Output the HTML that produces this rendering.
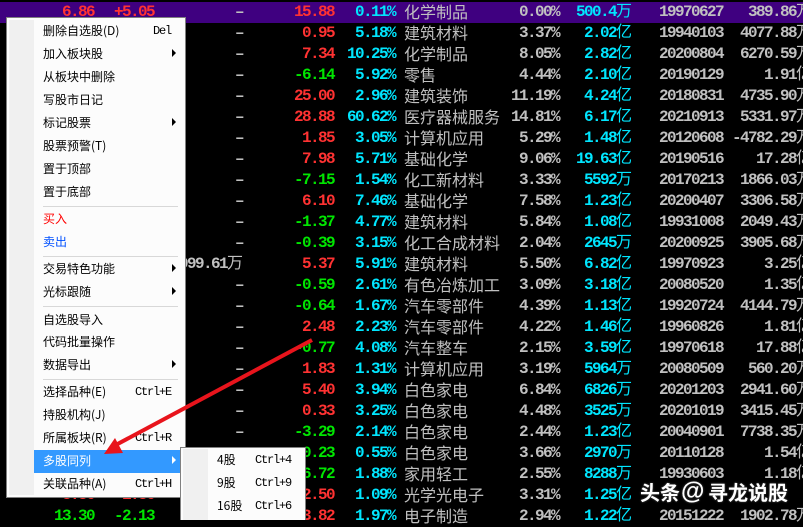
<!DOCTYPE html>
<html><head><meta charset="utf-8"><style>
html,body{margin:0;padding:0;background:#000}
body{width:803px;height:520px;overflow:hidden;position:relative}
.r{position:absolute;left:0;width:812px;height:21px;font:bold 16px/21px "Liberation Mono",monospace;letter-spacing:-1.6px;white-space:nowrap}
.r span{position:absolute;top:0;text-align:right}
.r u{text-decoration:none;font:normal 16px/0 "WenQuanYi Zen Hei","Noto Sans CJK SC",sans-serif;letter-spacing:0;color:inherit}
.a{left:20px;width:74px}.b{left:100px;width:54px}
.c{left:150px;width:93px;color:#c0c0c0}
.d{left:260px;width:74px}.e{left:335px;width:60px;color:#00e6ff}
.r .f{left:404px;top:-1px;text-align:left;font:normal 16px/21px "WenQuanYi Zen Hei","Noto Sans CJK SC",sans-serif;letter-spacing:0;color:#c0c0c0}
.g{left:480px;width:79px;color:#c0c0c0}.h{left:540px;width:92px;color:#00e6ff}
.r .i{left:659px;text-align:left;color:#c0c0c0}.j{left:670px;width:142px;color:#c0c0c0}
.R{color:#ff3232}.G{color:#00e600}
#m,#s{position:absolute;background:#fcfcfc;border:1px solid #808080;box-sizing:border-box}
#m{left:6px;top:17px;width:180px;height:481px}
#s{left:180px;top:447px;width:126px;height:80px}
.gt{position:absolute;background:#f0f0f0}
.t{position:absolute;font:12px/14px "WenQuanYi Zen Hei","Noto Sans CJK SC",sans-serif;color:#000;white-space:nowrap}
.k{position:absolute;font:12px/14px "Liberation Mono",monospace;letter-spacing:-1.2px;color:#000;white-space:nowrap}
.sep{position:absolute;left:43px;width:135px;height:1px;background:#d8d8d8}
.ar{position:absolute;width:0;height:0;border-left:4px solid #000;border-top:4px solid transparent;border-bottom:4px solid transparent}
.wm{position:absolute;top:480px;font:bold 20px/24px "Noto Sans CJK SC",sans-serif;color:#fff;white-space:nowrap;text-shadow:0 0 2px #555}
</style></head><body>
<div style="position:absolute;left:0;top:2px;width:803px;height:21px;background:#3f0080"></div>
<div class="r" style="top:2px"><span class="a R">6.86</span><span class="b R">+5.05</span><span class="c">–</span><span class="d R">15.88</span><span class="e">0.11%</span><span class="f">化学制品</span><span class="g">0.00%</span><span class="h">500.4<u>万</u></span><span class="i">19970627</span><span class="j">389.86<u>万</u></span></div>
<div class="r" style="top:23px"><span class="c">–</span><span class="d R">0.95</span><span class="e">5.18%</span><span class="f">建筑材料</span><span class="g">3.37%</span><span class="h">2.02<u>亿</u></span><span class="i">19940103</span><span class="j">4077.88<u>万</u></span></div>
<div class="r" style="top:44px"><span class="c">–</span><span class="d R">7.34</span><span class="e">10.25%</span><span class="f">化学制品</span><span class="g">8.05%</span><span class="h">2.82<u>亿</u></span><span class="i">20200804</span><span class="j">6270.59<u>万</u></span></div>
<div class="r" style="top:65px"><span class="c">–</span><span class="d G">-6.14</span><span class="e">5.92%</span><span class="f">零售</span><span class="g">4.44%</span><span class="h">2.10<u>亿</u></span><span class="i">20190129</span><span class="j">1.91<u>亿</u></span></div>
<div class="r" style="top:86px"><span class="c">–</span><span class="d R">25.00</span><span class="e">2.96%</span><span class="f">建筑装饰</span><span class="g">11.19%</span><span class="h">4.24<u>亿</u></span><span class="i">20180831</span><span class="j">4735.90<u>万</u></span></div>
<div class="r" style="top:107px"><span class="c">–</span><span class="d R">28.88</span><span class="e">60.62%</span><span class="f">医疗器械服务</span><span class="g">14.81%</span><span class="h">6.17<u>亿</u></span><span class="i">20210913</span><span class="j">5331.97<u>万</u></span></div>
<div class="r" style="top:128px"><span class="c">–</span><span class="d R">1.85</span><span class="e">3.05%</span><span class="f">计算机应用</span><span class="g">5.29%</span><span class="h">1.48<u>亿</u></span><span class="i">20120608</span><span class="j">-4782.29<u>万</u></span></div>
<div class="r" style="top:149px"><span class="c">–</span><span class="d R">7.98</span><span class="e">5.71%</span><span class="f">基础化学</span><span class="g">9.06%</span><span class="h">19.63<u>亿</u></span><span class="i">20190516</span><span class="j">17.28<u>亿</u></span></div>
<div class="r" style="top:170px"><span class="c">–</span><span class="d G">-7.15</span><span class="e">1.54%</span><span class="f">化工新材料</span><span class="g">3.33%</span><span class="h">5592<u>万</u></span><span class="i">20170213</span><span class="j">1866.03<u>万</u></span></div>
<div class="r" style="top:191px"><span class="c">–</span><span class="d R">6.10</span><span class="e">7.46%</span><span class="f">基础化学</span><span class="g">7.58%</span><span class="h">1.23<u>亿</u></span><span class="i">20200407</span><span class="j">3306.58<u>万</u></span></div>
<div class="r" style="top:212px"><span class="c">–</span><span class="d G">-1.37</span><span class="e">4.77%</span><span class="f">建筑材料</span><span class="g">5.84%</span><span class="h">1.08<u>亿</u></span><span class="i">19931008</span><span class="j">2049.43<u>万</u></span></div>
<div class="r" style="top:233px"><span class="c">–</span><span class="d G">-0.39</span><span class="e">3.15%</span><span class="f">化工合成材料</span><span class="g">2.04%</span><span class="h">2645<u>万</u></span><span class="i">20200925</span><span class="j">3905.68<u>万</u></span></div>
<div class="r" style="top:254px"><span class="c">4999.61<u>万</u></span><span class="d R">5.37</span><span class="e">5.91%</span><span class="f">建筑材料</span><span class="g">5.50%</span><span class="h">6.82<u>亿</u></span><span class="i">19970923</span><span class="j">3.25<u>亿</u></span></div>
<div class="r" style="top:275px"><span class="c">–</span><span class="d G">-0.59</span><span class="e">2.61%</span><span class="f">有色冶炼加工</span><span class="g">3.09%</span><span class="h">3.18<u>亿</u></span><span class="i">20080520</span><span class="j">1.35<u>亿</u></span></div>
<div class="r" style="top:296px"><span class="c">–</span><span class="d G">-0.64</span><span class="e">1.67%</span><span class="f">汽车零部件</span><span class="g">4.39%</span><span class="h">1.13<u>亿</u></span><span class="i">19920724</span><span class="j">4144.79<u>万</u></span></div>
<div class="r" style="top:317px"><span class="c">–</span><span class="d R">2.48</span><span class="e">2.23%</span><span class="f">汽车零部件</span><span class="g">4.22%</span><span class="h">1.46<u>亿</u></span><span class="i">19960826</span><span class="j">1.81<u>亿</u></span></div>
<div class="r" style="top:338px"><span class="c">–</span><span class="d G">-0.77</span><span class="e">4.08%</span><span class="f">汽车整车</span><span class="g">2.15%</span><span class="h">3.59<u>亿</u></span><span class="i">19970618</span><span class="j">17.88<u>亿</u></span></div>
<div class="r" style="top:359px"><span class="c">–</span><span class="d R">1.83</span><span class="e">1.31%</span><span class="f">计算机应用</span><span class="g">3.19%</span><span class="h">5964<u>万</u></span><span class="i">20080509</span><span class="j">560.20<u>万</u></span></div>
<div class="r" style="top:380px"><span class="c">–</span><span class="d R">5.40</span><span class="e">3.94%</span><span class="f">白色家电</span><span class="g">6.84%</span><span class="h">6826<u>万</u></span><span class="i">20201203</span><span class="j">2941.60<u>万</u></span></div>
<div class="r" style="top:401px"><span class="c">–</span><span class="d R">0.33</span><span class="e">3.25%</span><span class="f">白色家电</span><span class="g">4.48%</span><span class="h">3525<u>万</u></span><span class="i">20201019</span><span class="j">3415.45<u>万</u></span></div>
<div class="r" style="top:422px"><span class="c">–</span><span class="d G">-3.29</span><span class="e">2.14%</span><span class="f">白色家电</span><span class="g">2.44%</span><span class="h">1.23<u>亿</u></span><span class="i">20040901</span><span class="j">7738.35<u>万</u></span></div>
<div class="r" style="top:443px"><span class="d G">0.23</span><span class="e">0.55%</span><span class="f">白色家电</span><span class="g">3.66%</span><span class="h">2970<u>万</u></span><span class="i">20110128</span><span class="j">1.54<u>亿</u></span></div>
<div class="r" style="top:464px"><span class="d G">6.72</span><span class="e">1.88%</span><span class="f">家用轻工</span><span class="g">2.55%</span><span class="h">8288<u>万</u></span><span class="i">19930603</span><span class="j">1.18<u>亿</u></span></div>
<div class="r" style="top:485px"><span class="a R">8.86</span><span class="b R">+1.86</span><span class="d R">2.50</span><span class="e">1.09%</span><span class="f">光学光电子</span><span class="g">3.31%</span><span class="h">1.25<u>亿</u></span></div>
<div class="r" style="top:506px"><span class="a G">13.30</span><span class="b G">-2.13</span><span class="d R">3.82</span><span class="e">1.97%</span><span class="f">电子制造</span><span class="g">2.94%</span><span class="h">1.22<u>亿</u></span><span class="i">20151222</span><span class="j">1902.78<u>万</u></span></div>

<div style="position:absolute;left:0;top:0;width:803px;height:520px;overflow:hidden">
<div id="m" style="left:6px;top:17px"></div>
<div class="gt" style="left:9px;top:20px;width:25px;height:475px"></div>
<div style="position:absolute;left:34px;top:450px;width:147px;height:23px;background:#3399ff"></div>
<div class="t" style="left:43px;top:24px">删除自选股(D)</div><div class="k" style="left:153px;top:24px">Del</div>
<div class="t" style="left:43px;top:47px">加入板块股</div><div class="ar" style="left:172px;top:49px"></div>
<div class="t" style="left:43px;top:70px">从板块中删除</div>
<div class="t" style="left:43px;top:93px">写股市日记</div>
<div class="t" style="left:43px;top:116px">标记股票</div><div class="ar" style="left:172px;top:118px"></div>
<div class="t" style="left:43px;top:139px">股票预警(T)</div>
<div class="t" style="left:43px;top:162px">置于顶部</div>
<div class="t" style="left:43px;top:185px">置于底部</div>
<div class="sep" style="top:206px"></div>
<div class="t" style="left:43px;top:212px;color:#f00">买入</div>
<div class="t" style="left:43px;top:235px;color:#0050ff">卖出</div>
<div class="sep" style="top:256px"></div>
<div class="t" style="left:43px;top:262px">交易特色功能</div><div class="ar" style="left:172px;top:264px"></div>
<div class="t" style="left:43px;top:285px">光标跟随</div><div class="ar" style="left:172px;top:287px"></div>
<div class="sep" style="top:306px"></div>
<div class="t" style="left:43px;top:313px">自选股导入</div>
<div class="t" style="left:43px;top:335px">代码批量操作</div>
<div class="t" style="left:43px;top:358px">数据导出</div><div class="ar" style="left:172px;top:360px"></div>
<div class="sep" style="top:379px"></div>
<div class="t" style="left:43px;top:385px">选择品种(E)</div><div class="k" style="left:135px;top:385px">Ctrl+E</div>
<div class="t" style="left:43px;top:408px">持股机构(J)</div>
<div class="t" style="left:43px;top:431px">所属板块(R)</div><div class="k" style="left:135px;top:431px">Ctrl+R</div>
<div class="t" style="left:43px;top:454px;color:#fff">多股同列</div><div class="ar" style="left:172px;top:456px;border-left-color:#fff"></div>
<div class="t" style="left:43px;top:477px">关联品种(A)</div><div class="k" style="left:135px;top:477px">Ctrl+H</div>

<div id="s"></div>
<div class="gt" style="left:183px;top:449px;width:25px;height:71px"></div>
<div class="t" style="left:217px;top:453px">4股</div><div class="k" style="left:255px;top:453px">Ctrl+4</div>
<div class="t" style="left:217px;top:476px">9股</div><div class="k" style="left:255px;top:476px">Ctrl+9</div>
<div class="t" style="left:217px;top:499px">16股</div><div class="k" style="left:255px;top:499px">Ctrl+6</div>

<svg style="position:absolute;left:0;top:0" width="803" height="520" viewBox="0 0 803 520"><line x1="312" y1="340" x2="112" y2="447" stroke="#e8141c" stroke-width="4"/><polygon points="104,454 115,438 123,453" fill="#e8141c"/></svg>
<div class="wm" style="left:640px">头条</div>
<div class="wm" style="left:681px;font-family:'Liberation Sans',sans-serif;font-size:24px">@</div>
<div class="wm" style="left:708px">寻龙说股</div>
</div>
</body></html>
